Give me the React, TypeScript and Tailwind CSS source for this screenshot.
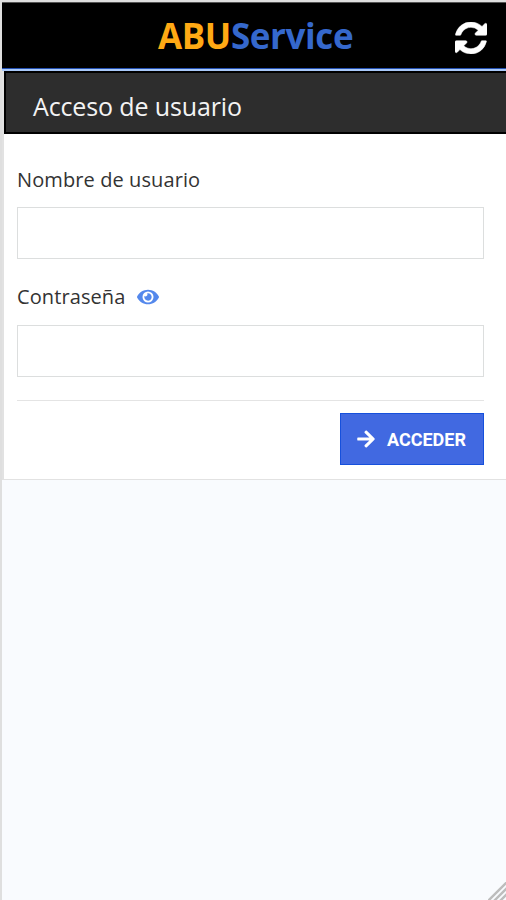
import { FaArrowRight, FaEye } from "react-icons/fa";

function RefreshIcon() {
  return (
    <svg className="size-[32px]" viewBox="0 128 1536 1536" fill="currentColor" stroke="currentColor" strokeWidth="24" aria-hidden="true">
      <path d="M1511 1056q0 5-1 7-64 268-268 434.5t-478 166.5q-146 0-282.5-55t-243.5-157l-129 129q-19 19-45 19t-45-19-19-45v-448q0-26 19-45t45-19h448q26 0 45 19t19 45-19 45l-137 137q71 66 161 102t187 36q134 0 250-65t186-179q11-17 53-117 8-23 30-23h192q13 0 22.5 9.5t9.5 22.5zm25-800v448q0 26-19 45t-45 19h-448q-26 0-45-19t-19-45 19-45l138-138q-148-137-349-137-134 0-250 65t-186 179q-11 17-53 117-8 23-30 23h-199q-13 0-22.5-9.5t-9.5-22.5v-7q65-268 270-434.5t480-166.5q146 0 284 55.5t245 156.5l130-129q19-19 45-19t45 19 19 45z" />
    </svg>
  );
}

function Header() {
  return (
    <header className="flex h-[69px] shrink-0 items-start border-t border-b-2 border-t-[#555555] border-b-[#a9c8f8] bg-black shadow-[inset_0_-1px_0_#2450b0]">
      <h1 className="ml-[156px] mt-[8px] w-[200px] whitespace-nowrap font-['Open_Sans',sans-serif] text-[35px] font-bold leading-[50px] tracking-[-0.4px] text-[#ffa914]">
        ABU<span className="text-[#3568cc]">Service</span>
      </h1>
      <button aria-label="Actualizar" className="ml-auto mr-[19px] mt-[19px] text-white">
        <RefreshIcon />
      </button>
    </header>
  );
}

export default function App() {
  return (
    <div className="flex h-[900px] w-[506px] flex-col overflow-hidden border-l-2 border-t-2 border-[#dfdfdf] bg-[#f9fbfe] font-['Open_Sans',sans-serif]">
      <Header />
      <main className="flex h-[409px] shrink-0 flex-col border-b border-l-2 border-[#e2e2e2] bg-white">
        <h2 className="h-[63px] shrink-0 whitespace-nowrap border-2 border-r-0 border-black bg-[#2d2d2d] pl-[27px] pt-[13px] text-[25px] leading-[40px] tracking-[-0.13px] text-[#f3f3f3]">
          Acceso de usuario
        </h2>
        <form className="flex flex-col pl-[13px] pr-[22px]">
          <label htmlFor="user" className="mt-[31px] h-[30px] whitespace-nowrap text-[20px] leading-[30px] tracking-[0.1px] text-[#333333]">
            Nombre de usuario
          </label>
          <input id="user" className="mt-[12px] h-[52px] border border-[#dcdede] bg-white px-3 text-xl outline-none" />
          <div className="mt-[23px] flex h-[30px] items-center">
            <label htmlFor="password" className="w-[120px] whitespace-nowrap text-[20px] leading-[30px] tracking-[0.1px] text-[#333333]">
              Contraseña
            </label>
            <FaEye className="size-[22px] text-[#5488ec]" />
          </div>
          <input id="password" type="password" className="mt-[13px] h-[52px] border border-[#dcdede] bg-white px-3 text-xl outline-none" />
          <div className="mt-[23px] flex justify-end border-t border-[#e4e4e4] pt-[12px]">
            <button type="button" className="flex h-[52px] w-[144px] items-center border border-[#1650dc] bg-[#4169e1] pl-[15px] font-['Roboto',sans-serif] text-[18px] font-bold text-white">
              <FaArrowRight className="mr-[11px] size-[20px] shrink-0" />
              <span className="tracking-[0px]">ACCEDER</span>
            </button>
          </div>
        </form>
      </main>
      <svg className="ml-auto mt-auto size-[18px]" viewBox="0 0 18 18" fill="none" stroke="#bdbdbd" strokeWidth="2.4">
        <path d="M0 19 19 0M6 19 19 6M12 19 19 12" />
      </svg>
    </div>
  );
}
